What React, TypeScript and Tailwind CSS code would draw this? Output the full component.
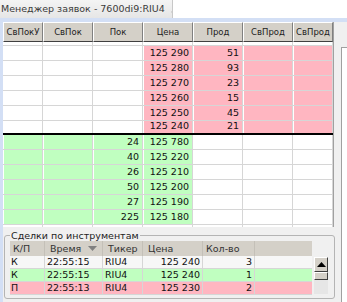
import React from "react";

const topRows = [
  { price: "125 290", sell: "51" },
  { price: "125 280", sell: "93" },
  { price: "125 270", sell: "23" },
  { price: "125 260", sell: "15" },
  { price: "125 250", sell: "45" },
  { price: "125 240", sell: "21" },
];

const bottomRows = [
  { buy: "24", price: "125 780" },
  { buy: "40", price: "125 220" },
  { buy: "26", price: "125 210" },
  { buy: "50", price: "125 200" },
  { buy: "27", price: "125 190" },
  { buy: "225", price: "125 180" },
];

const deals = [
  { side: "К", time: "22:55:15", ticker: "RIU4", price: "125 240", qty: "3", bg: "bg-[#f7f7f7]" },
  { side: "К", time: "22:55:15", ticker: "RIU4", price: "125 240", qty: "1", bg: "bg-[#c0ffc0]" },
  { side: "П", time: "22:55:13", ticker: "RIU4", price: "125 230", qty: "2", bg: "bg-[#ffb6c1]" },
];

const widths = ["w-[40px]", "w-[50px]", "w-[50px]", "w-[50px]", "w-[50px]", "w-[50px]", "w-[40px]"];
const headers = ["СвПокУ", "СвПок", "Пок", "Цена", "Прод", "СвПрод", "СвПрод"];

function Cell({ w, bg, children }: { w: string; bg: string; children?: React.ReactNode }) {
  return (
    <div className={`${w} ${bg} h-full flex items-end justify-end pr-[3px] pb-[1px] border-r border-r-[#d6d6d6] border-l border-l-white`}>
      {children}
    </div>
  );
}

export default function App() {
  return (
    <div className="w-[347px] h-[302px] overflow-hidden bg-white text-[9.5px] leading-[12px] text-[#111] font-['DejaVu_Sans',sans-serif]">
      {/* Title tab */}
      <div className="h-[18px] flex">
        <div className="w-[173px] h-full flex items-center bg-gradient-to-b from-[#f4f4f4] to-[#e6e6e6] border-r border-[#c8c8c8]">
          <span className="pl-[1px] text-[#3a3a3a] whitespace-nowrap">Менеджер заявок - 7600di9:RIU4</span>
          <svg className="ml-[6px] mt-[5px]" width="11" height="10" viewBox="0 0 11 10">
            <path d="M1 1 L10 9 M10 1 L1 9" stroke="#4a4a4a" strokeWidth="1.5" />
          </svg>
        </div>
      </div>
      <div className="h-[4px] bg-[#d3dff5]" />

      <div className="flex h-[280px]">
        {/* left strip */}
        <div className="w-[3px] h-full bg-[#d3dff5]" />

        <div className="w-[338px] flex flex-col">
          {/* order book */}
          <div className="flex h-[205px]">
            <div className="w-[330px] flex flex-col">
              <div className="flex h-[20px] text-[8.5px]">
                {headers.map((h, i) => (
                  <div
                    key={i}
                    className={`${widths[i]} h-full flex items-center justify-center bg-[#d4d0c8] text-[#222] border-t border-l border-white border-r border-r-[#808080] border-b border-b-[#404040]`}
                  >
                    {h}
                  </div>
                ))}
              </div>
              <div className="h-[4px] flex border-b border-[#d6d6d6]">
                {widths.map((w, i) => (
                  <Cell key={i} w={w} bg="bg-white" />
                ))}
              </div>
              {topRows.map((r, i) => (
                <div
                  key={i}
                  className={`flex ${i === 5 ? "h-[14px] border-b-2 border-black" : "h-[15px] border-b border-[#d6d6d6]"}`}
                >
                  <Cell w="w-[40px]" bg="bg-white" />
                  <Cell w="w-[50px]" bg="bg-white" />
                  <Cell w="w-[50px]" bg="bg-white" />
                  <Cell w="w-[50px]" bg="bg-[#ffb6c1]">{r.price}</Cell>
                  <Cell w="w-[50px]" bg="bg-[#ffb6c1]">{r.sell}</Cell>
                  <Cell w="w-[50px]" bg="bg-[#ffb6c1]" />
                  <Cell w="w-[40px]" bg="bg-[#ffb6c1]" />
                </div>
              ))}
              {bottomRows.map((r, i) => (
                <div key={i} className="flex h-[15px] border-b border-[#d6d6d6]">
                  <Cell w="w-[40px]" bg="bg-[#c0ffc0]" />
                  <Cell w="w-[50px]" bg="bg-[#c0ffc0]" />
                  <Cell w="w-[50px]" bg="bg-[#c0ffc0]">{r.buy}</Cell>
                  <Cell w="w-[50px]" bg="bg-[#c0ffc0]">{r.price}</Cell>
                  <Cell w="w-[50px]" bg="bg-white" />
                  <Cell w="w-[50px]" bg="bg-white" />
                  <Cell w="w-[40px]" bg="bg-white" />
                </div>
              ))}
              <div className="flex h-[2px]">
                {widths.map((w, i) => (
                  <Cell key={i} w={w} bg="bg-white" />
                ))}
              </div>
            </div>
            <div className="w-[8px] h-full bg-[#f0f0f0] border-l border-[#a0a0a0]" />
          </div>

          {/* deals panel */}
          <div className="h-[75px] bg-[#f0f0f0] pt-[3px] pl-[1px]">
            <fieldset className="w-[331px] h-[69px] border border-[#b4b4b4] rounded-[3px] px-[5px] pb-[3px]">
              <legend className="px-[1px] leading-[11px] text-[#222]">Сделки по инструментам</legend>
              <div className="flex">
                <div className="w-[302px] flex flex-col">
                  <div className="flex h-[15px] bg-[#d4d0c8] text-[#333]">
                    <div className="w-[35px] pl-[3px] flex items-center border-r border-[#c4c0b8]">К/П</div>
                    <div className="w-[58px] pl-[5px] flex items-center justify-between pr-[5px] border-r border-[#c4c0b8]">
                      <span>Время</span>
                      <svg width="9" height="5" viewBox="0 0 9 5">
                        <path d="M0 0 H9 L4.5 5 Z" fill="#808080" />
                      </svg>
                    </div>
                    <div className="w-[40px] pl-[5px] flex items-center border-r border-[#c4c0b8]">Тикер</div>
                    <div className="w-[60px] pl-[5px] flex items-center border-r border-[#c4c0b8]">Цена</div>
                    <div className="w-[52px] pl-[3px] flex items-center border-r border-[#c4c0b8]">Кол-во</div>
                    <div className="w-[57px]" />
                  </div>
                  {deals.map((d, i) => (
                    <div key={i} className={`flex h-[13px] ${d.bg} border-b border-[#d6d6d6]`}>
                      <div className="w-[35px] pl-[1px] flex items-center border-r border-[#d6d6d6]">{d.side}</div>
                      <div className="w-[58px] pl-[2px] flex items-center border-r border-[#d6d6d6]">{d.time}</div>
                      <div className="w-[40px] pl-[2px] flex items-center border-r border-[#d6d6d6]">{d.ticker}</div>
                      <div className="w-[60px] pr-[2px] flex items-center justify-end border-r border-[#d6d6d6]">{d.price}</div>
                      <div className="w-[52px] pr-[2px] flex items-center justify-end border-r border-[#d6d6d6]">{d.qty}</div>
                      <div className="w-[57px]" />
                    </div>
                  ))}
                </div>
                {/* scrollbar */}
                <div className="w-[16px] flex flex-col pl-[2px] pt-[16px]">
                  <div className="h-[15px] flex items-center justify-center bg-[#d4d0c8] border border-t-white border-l-white border-r-[#404040] border-b-[#404040]">
                    <svg width="9" height="5" viewBox="0 0 9 5">
                      <path d="M4.5 0 L9 5 H0 Z" fill="#000" />
                    </svg>
                  </div>
                  <div className="h-[8px] bg-[#d4d0c8] border border-t-white border-l-white border-r-[#404040] border-b-[#404040]" />
                  <div className="h-[14px] bg-[#e6e6e6]" />
                </div>
              </div>
            </fieldset>
          </div>
        </div>

        {/* right strip */}
        <div className="w-[6px] h-full flex flex-col bg-[#f0f0f0]">
          <div className="h-[25px]" />
          <div className="flex-1 bg-white border-l border-t border-[#a0a0a0]" />
        </div>
      </div>
    </div>
  );
}
